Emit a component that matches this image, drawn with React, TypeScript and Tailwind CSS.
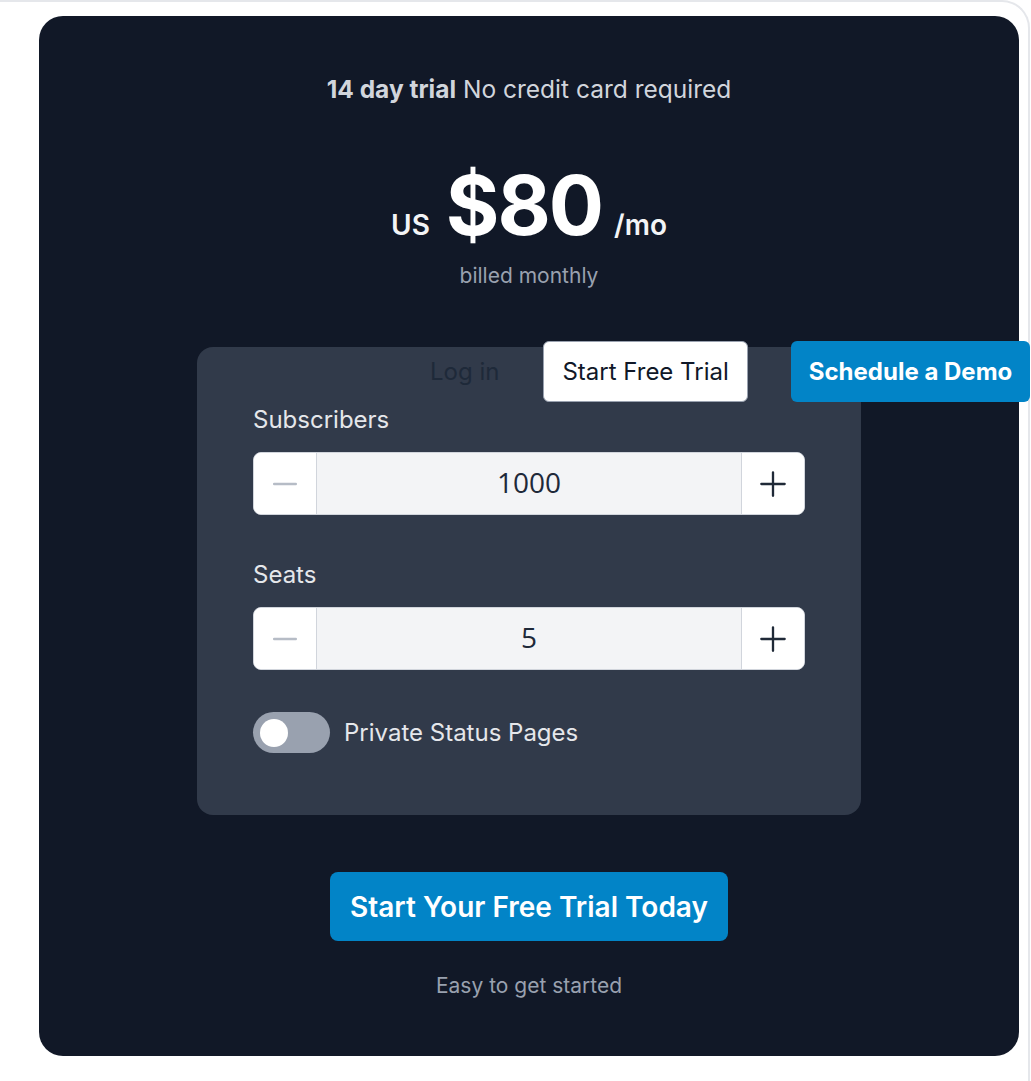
import { useState } from 'react';

type CounterProps = {
  label: string;
  value: number;
  onChange: (v: number) => void;
  className?: string;
};

function Counter({ label, value, onChange, className }: CounterProps) {
  return (
    <div className={className}>
      <div className="text-2xl leading-7 text-gray-200">{label}</div>
      <div className="mt-[18px] flex h-[63px] w-full overflow-hidden rounded-lg border border-gray-300 bg-white">
        <button
          onClick={() => onChange(Math.max(0, value - 1))}
          className="flex w-[63px] shrink-0 items-center justify-center border-r border-gray-300 bg-white"
        >
          <svg width="26" height="26" viewBox="0 0 24 24" fill="none" stroke="#b6bcc6" strokeWidth="2.2" strokeLinecap="round">
            <path d="M2 12h20" />
          </svg>
        </button>
        <div className="flex flex-1 items-center justify-center bg-gray-100 pb-[3px] font-['Open_Sans',sans-serif] text-[28px] text-gray-800">
          {value}
        </div>
        <button
          onClick={() => onChange(value + 1)}
          className="flex w-[63px] shrink-0 items-center justify-center border-l border-gray-300 bg-white"
        >
          <svg width="28" height="28" viewBox="0 0 24 24" fill="none" stroke="#1f2937" strokeWidth="2" strokeLinecap="round">
            <path d="M2 12h20M12 2v20" />
          </svg>
        </button>
      </div>
    </div>
  );
}

export default function App() {
  const [subscribers, setSubscribers] = useState(1000);
  const [seats, setSeats] = useState(5);
  const [isPrivate, setIsPrivate] = useState(false);

  return (
    <div className="relative h-[1081px] w-[1031px] overflow-hidden bg-white font-['Inter',sans-serif]">
      <div className="mr-[1px] h-full rounded-tr-[28px] border-t-2 border-r-2 border-gray-200 pt-[14px] pl-[39px]">
        <div className="flex h-[1040px] w-[980px] flex-col items-center rounded-3xl bg-[#111827]">
          <p className="mt-[57px] text-[24.5px] leading-8 text-gray-300">
            <span className="font-bold">14 day trial</span> No credit card required
          </p>

          <div className="mt-[53px] flex items-baseline text-white">
            <span className="mr-[16px] text-[28px] font-semibold text-gray-100">US</span>
            <span className="text-[82px] font-bold leading-[96px] tracking-tight">$80</span>
            <span className="ml-[12px] text-[28px] font-semibold text-gray-100">/mo</span>
          </div>
          <p className="mt-[8px] text-[21px] leading-7 text-gray-400">billed monthly</p>

          <div className="mt-[57px] h-[468px] w-[664px] rounded-2xl bg-[#313a4a] px-14 pt-[59px]">
            <Counter label="Subscribers" value={subscribers} onChange={setSubscribers} />
            <Counter label="Seats" value={seats} onChange={setSeats} className="mt-[46px]" />

            <div className="mt-[42px] flex items-center gap-[14px]">
              <button
                onClick={() => setIsPrivate(!isPrivate)}
                className={`flex h-[41px] w-[77px] items-center rounded-full px-[7px] ${isPrivate ? 'bg-sky-600 justify-end' : 'bg-gray-400 justify-start'}`}
              >
                <span className="h-[28px] w-[28px] rounded-full bg-white" />
              </button>
              <span className="text-2xl text-gray-200">Private Status Pages</span>
            </div>
          </div>

          <button className="mt-[57px] h-[69px] rounded-lg bg-[#0284c7] px-[20px] text-[28px] font-semibold text-white">
            Start Your Free Trial Today
          </button>
          <p className="mt-[31px] text-[21px] leading-7 text-gray-400">Easy to get started</p>
        </div>
      </div>

      <nav className="absolute top-[341px] left-[430px] flex items-center">
        <a className="text-2xl text-gray-800">Log in</a>
        <button className="ml-[44px] h-[61px] rounded-md border border-gray-400 bg-white px-[18px] text-2xl text-gray-900">
          Start Free Trial
        </button>
        <button className="ml-[43px] h-[61px] rounded-md bg-[#0284c7] px-[18px] text-2xl font-bold text-white">
          Schedule a Demo
        </button>
      </nav>
    </div>
  );
}
